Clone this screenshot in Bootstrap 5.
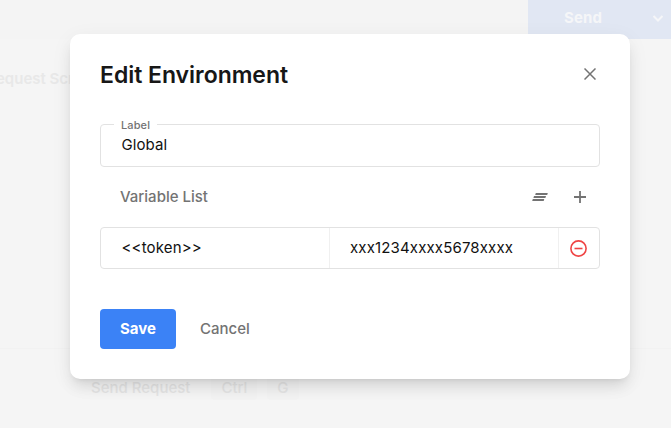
<!DOCTYPE html>
<html lang="en">
<head>
<meta charset="utf-8">
<meta name="viewport" content="width=device-width, initial-scale=1">
<title>Edit Environment</title>
<link href="https://cdn.jsdelivr.net/npm/bootstrap@5.3.0/dist/css/bootstrap.min.css" rel="stylesheet">
<style>
body{font-family:Inter,"Liberation Sans",sans-serif;font-size:15px;font-weight:500;line-height:20px;background:#f5f5f5;color:#737373}
.page{height:428px}
.topbar{height:39px;background:#f4f4f4}
.send{width:143px;background:#e1e7f3;color:#f5f6f8;font-weight:700;line-height:36px}
.send-label{width:110px;letter-spacing:.1px}
.send svg{margin-left:14px;margin-top:12px}
.page-tab{color:#e8e8e8;font-weight:600;margin-left:-4px;padding-top:30px}
.hints{color:#e5e5e5;padding-left:91px;margin-top:auto;height:80px;border-top:1px solid #f2f2f2;padding-top:25px}
.keycap{background:#f3f3f3;border-radius:4px;height:26px;padding:4px 10px 0}
.keycap-first{margin-left:21px}
.keycap-last{margin-left:10px}
.dialog-box{width:560px;height:345px;margin:34px 0 0 70px;border-radius:10px;padding:0 30px;background:#fff;box-shadow:0 10px 15px -3px rgba(0,0,0,.1),0 4px 6px -4px rgba(0,0,0,.1),0 5px 22px rgba(0,0,0,.055)}
.dialog-head{height:90px;padding-bottom:9px}
.dialog-title{font-size:23px;line-height:32px;font-weight:600;color:#171717;letter-spacing:-.03px}
.close-btn{margin:0 4px 2px 0}
.field{height:43px;margin:0;padding:10px 20px 0 20.5px;border:1px solid #e2e2e2;border-radius:4px;color:#111;font-weight:400;letter-spacing:.1px}
.field legend{position:absolute;top:-8px;left:13px;width:auto;margin:0;padding:0 7px;background:#fff;color:#737373;font-size:11px;line-height:16px;font-weight:500;letter-spacing:.1px;float:none}
.list-head{height:60px;padding:0 14px 0 20px}
.clear-btn{margin-right:26px}
.var-row{height:42px;border:1px solid #e2e2e2;border-radius:4px;color:#111;font-weight:400}
.var-cell{width:229px;padding-left:20.5px;border-right:1px solid #f0f0f0;letter-spacing:.15px}
.var-cell + .var-cell{padding-left:20px}
.remove-cell{padding-right:1px}
.actions{margin-top:40px;gap:24px}
.save{width:76px;height:40px;padding:0;border:0;border-radius:4px;background:#3b82f6;color:#fff;font-size:15px;font-weight:700}
.plain-btn{padding:0;border:0;color:#737373;font-size:15px;font-weight:500;line-height:20px}
svg{display:block}
</style>
</head>
<body class="overflow-hidden">
<div class="page d-flex flex-column overflow-hidden" aria-hidden="true">
  <div class="topbar d-flex justify-content-end">
    <div class="send d-flex">
      <span class="send-label text-center">Send</span>
      <svg width="12" height="12" viewBox="0 0 12 12" fill="none" stroke="#f5f6f8" stroke-width="2"><path d="M1.5 4 6 8.5 10.5 4"/></svg>
    </div>
  </div>
  <div class="page-tab text-nowrap">equest Script</div>
  <div class="hints d-flex">
    <span class="pt-1">Send Request</span>
    <span class="keycap keycap-first">Ctrl</span>
    <span class="keycap keycap-last">G</span>
  </div>
</div>
<div class="position-absolute top-0 start-0 w-100 d-flex">
  <div class="dialog-box d-flex flex-column" role="dialog" aria-labelledby="dialog-title">
    <header class="dialog-head d-flex align-items-center justify-content-between">
      <h1 class="dialog-title mb-0" id="dialog-title">Edit Environment</h1>
      <button class="btn plain-btn close-btn" aria-label="Close"><svg width="12" height="12" viewBox="0 0 12 12" stroke="#737373" stroke-width="1.5"><path d="M.5.5 11.5 11.5M11.5.5.5 11.5"/></svg></button>
    </header>
    <fieldset class="field position-relative"><legend>Label</legend>Global</fieldset>
    <div class="list-head d-flex align-items-center">
      <span class="me-auto">Variable List</span>
      <button class="btn plain-btn clear-btn" aria-label="Clear all"><svg width="16" height="10" viewBox="0 0 16 10" fill="#737373"><path d="M3.8 1H15.8L15.2 3H3.2zM2 4H14L13.4 6H1.4zM.8 7H12.3L11.7 9H.2z"/></svg></button>
      <button class="btn plain-btn" aria-label="Add variable"><svg width="12" height="12" viewBox="0 0 12 12" stroke="#737373" stroke-width="1.8"><path d="M0 6H12M6 0V12"/></svg></button>
    </div>
    <div class="var-row d-flex align-items-stretch">
      <div class="var-cell d-flex align-items-center">&lt;&lt;token&gt;&gt;</div>
      <div class="var-cell d-flex align-items-center">xxx1234xxxx5678xxxx</div>
      <div class="remove-cell flex-fill d-flex align-items-center justify-content-center"><svg width="17" height="17" viewBox="0 0 17 17" fill="none" stroke="#ef4444" stroke-width="1.6"><circle cx="8.5" cy="8.5" r="7.6"/><path d="M4.5 8.5H12.5"/></svg></div>
    </div>
    <div class="actions d-flex align-items-center">
      <button class="btn save">Save</button>
      <button class="btn plain-btn">Cancel</button>
    </div>
  </div>
</div>
<script src="https://cdn.jsdelivr.net/npm/bootstrap@5.3.0/dist/js/bootstrap.bundle.min.js"></script>
</body>
</html>
